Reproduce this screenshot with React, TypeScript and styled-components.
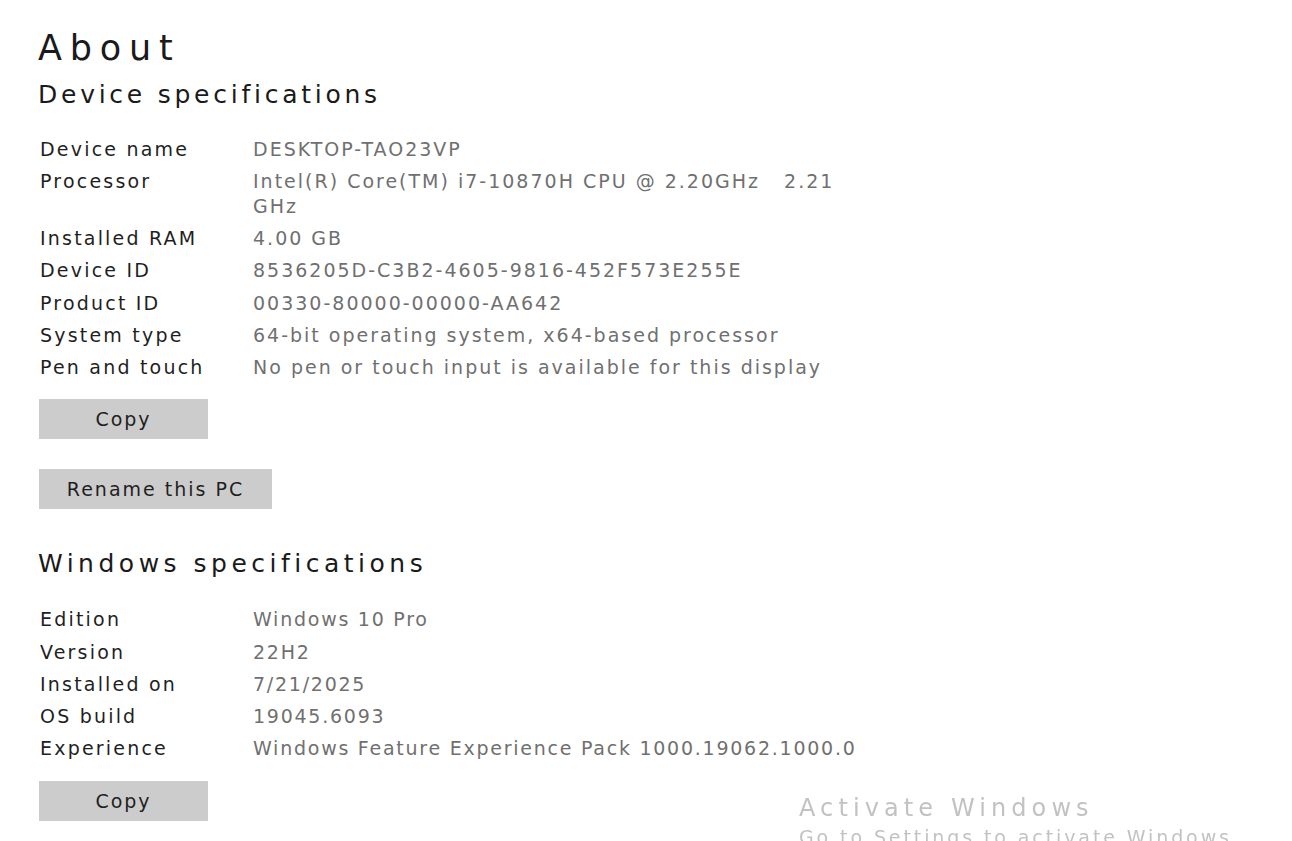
import React from "react";
import styled, { createGlobalStyle } from "styled-components";

const Global = createGlobalStyle`
  html, body { margin: 0; padding: 0; background: #ffffff; }
  body { font-family: "DejaVu Sans", "Open Sans", sans-serif; overflow: hidden; }
`;

const Page = styled.div`
  display: flex;
  flex-direction: column;
  align-items: flex-start;
  padding: 24px 0 0 40px;
  min-height: 841px;
  box-sizing: border-box;
  & > * { flex-shrink: 0; }
`;

const Title = styled.h1`
  margin: 0 0 0 -2px;
  font-size: 35px;
  line-height: 48px;
  font-weight: 400;
  letter-spacing: 7.8px;
  color: #1a1a1a;
`;

const SectionTitle = styled.h2<{ $top: number; $bottom: number; $spacing: number }>`
  margin: ${(p) => p.$top}px 0 ${(p) => p.$bottom}px -2px;
  font-size: 25px;
  line-height: 34px;
  font-weight: 400;
  letter-spacing: ${(p) => p.$spacing}px;
  color: #1a1a1a;
`;

const SpecList = styled.div`
  display: flex;
  flex-direction: column;
`;

const SpecRow = styled.div<{ $valueWidth: number }>`
  display: grid;
  grid-template-columns: 213px ${(p) => p.$valueWidth}px;
  padding: 3.9px 0;
  font-size: 19px;
  line-height: 24.5px;
`;

const Label = styled.div`
  color: #1f1f1f;
  letter-spacing: 2.2px;
`;

const Value = styled.div<{ $spacing: number }>`
  color: #707070;
  white-space: pre-wrap;
  letter-spacing: ${(p) => p.$spacing}px;
`;

const Button = styled.button<{ $width: number; $top: number }>`
  box-sizing: border-box;
  margin-top: ${(p) => p.$top}px;
  width: ${(p) => p.$width}px;
  height: 40px;
  border: none;
  background: #cccccc;
  color: #1f1f1f;
  font-family: inherit;
  font-size: 19px;
  letter-spacing: 2px;
  padding: 0;
  margin-left: -1px;
`;

const Watermark = styled.div`
  position: fixed;
  left: 799px;
  top: 793px;
  color: #c2c2c2;
  pointer-events: none;
  white-space: nowrap;
`;

const WatermarkTitle = styled.div`
  font-size: 24px;
  line-height: 30px;
  letter-spacing: 5.1px;
`;

const WatermarkSub = styled.div`
  font-size: 19px;
  line-height: 28px;
  letter-spacing: 2.9px;
`;

const device: [string, string][] = [
  ["Device name", "DESKTOP-TAO23VP"],
  ["Processor", "Intel(R) Core(TM) i7-10870H CPU @ 2.20GHz   2.21 GHz"],
  ["Installed RAM", "4.00 GB"],
  ["Device ID", "8536205D-C3B2-4605-9816-452F573E255E"],
  ["Product ID", "00330-80000-00000-AA642"],
  ["System type", "64-bit operating system, x64-based processor"],
  ["Pen and touch", "No pen or touch input is available for this display"],
];

const windows: [string, string][] = [
  ["Edition", "Windows 10 Pro"],
  ["Version", "22H2"],
  ["Installed on", "7/21/2025"],
  ["OS build", "19045.6093"],
  ["Experience", "Windows Feature Experience Pack 1000.19062.1000.0"],
];

function Specs({
  rows,
  valueWidth,
  valueSpacing,
}: {
  rows: [string, string][];
  valueWidth: number;
  valueSpacing: number;
}) {
  return (
    <SpecList>
      {rows.map(([k, v]) => (
        <SpecRow key={k} $valueWidth={valueWidth}>
          <Label>{k}</Label>
          <Value $spacing={valueSpacing}>{v}</Value>
        </SpecRow>
      ))}
    </SpecList>
  );
}

export default function App() {
  return (
    <>
      <Global />
      <Page>
        <Title>About</Title>
        <SectionTitle $top={6} $bottom={21} $spacing={3.75}>Device specifications</SectionTitle>
        <Specs rows={device} valueWidth={592} valueSpacing={2} />
        <Button $width={169} $top={16}>Copy</Button>
        <Button $width={233} $top={30}>Rename this PC</Button>
        <SectionTitle $top={38} $bottom={22} $spacing={4.5}>Windows specifications</SectionTitle>
        <Specs rows={windows} valueWidth={660} valueSpacing={1.75} />
        <Button $width={169} $top={16}>Copy</Button>
      </Page>
      <Watermark>
        <WatermarkTitle>Activate Windows</WatermarkTitle>
        <WatermarkSub>Go to Settings to activate Windows.</WatermarkSub>
      </Watermark>
    </>
  );
}
